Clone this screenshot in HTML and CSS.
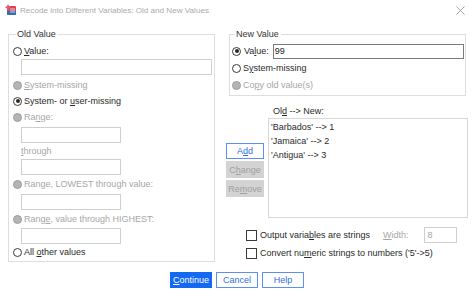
FILE: index.html
```html
<!DOCTYPE html>
<html>
<head>
<meta charset="utf-8">
<link rel="stylesheet" href="styles.css">
</head>
<body>
<div class="titlebar">
  <svg class="appicon" width="12" height="12" viewBox="0 0 12 12">
    <rect x="2" y="2" width="9" height="9" rx="1" fill="#d8425a"/>
    <rect x="2" y="7" width="9" height="4" rx="1" fill="#2f6fb8"/>
    <rect x="0.5" y="2.5" width="5" height="1.6" fill="#e85a6e"/>
    <rect x="2.2" y="0.8" width="1.6" height="5" fill="#e85a6e"/>
    <rect x="5" y="4" width="5" height="5" fill="#fff" opacity="0.35"/>
  </svg>
  <span class="title">Recode into Different Variables: Old and New Values</span>
  <svg class="close" width="9" height="9" viewBox="0 0 9 9">
    <path d="M0.5 0.5 L8.5 8.5 M8.5 0.5 L0.5 8.5" stroke="#8a8a8a" stroke-width="0.8"/>
  </svg>
</div>

<div class="main">
  <fieldset class="group old">
    <legend>Old Value</legend>
    <div class="row r14"><span class="radio"></span><span><u>V</u>alue:</span></div>
    <div class="input wide m1"></div>
    <div class="row dis m2"><span class="radio off"></span><span><u>S</u>ystem-missing</span></div>
    <div class="row"><span class="radio on"></span><span>System- or <u>u</u>ser-missing</span></div>
    <div class="row dis"><span class="radio off"></span><span>Ra<u>n</u>ge:</span></div>
    <div class="input small m2"></div>
    <div class="row dis ind"><span><u>t</u>hrough</span></div>
    <div class="input small"></div>
    <div class="row dis m1"><span class="radio off"></span><span>Range, LOWEST through value:</span></div>
    <div class="input small m2"></div>
    <div class="row dis m1"><span class="radio off"></span><span>Rang<u>e</u>, value through HIGHEST:</span></div>
    <div class="input small m1"></div>
    <div class="row"><span class="radio"></span><span>All <u>o</u>ther values</span></div>
  </fieldset>

  <div class="right">
    <fieldset class="group newv">
      <legend>New Value</legend>
      <div class="row vrow"><span class="radio on"></span><span class="vlabel">Va<u>l</u>ue:</span><div class="input val">99</div></div>
      <div class="row"><span class="radio"></span><span>S<u>y</u>stem-missing</span></div>
      <div class="row dis m1"><span class="radio off"></span><span>Co<u>p</u>y old value(s)</span></div>
    </fieldset>

    <div class="mid">
      <div class="btncol">
        <div class="btn add">A<u>d</u>d</div>
        <div class="btn gray">C<u>h</u>ange</div>
        <div class="btn gray">Re<u>m</u>ove</div>
      </div>
      <div class="listcol">
        <div class="listlabel">Ol<u>d</u> --&gt; New:</div>
        <div class="list">
          <div>'Barbados' --&gt; 1</div>
          <div>'Jamaica' --&gt; 2</div>
          <div>'Antigua' --&gt; 3</div>
        </div>
      </div>
    </div>

    <div class="checks">
      <div class="crow"><span class="check"></span><span class="ctext">Output varia<u>b</u>les are strings</span><span class="wlabel"><u>W</u>idth:</span><div class="input winput">8</div></div>
      <div class="crow"><span class="check"></span><span class="ctext">Convert nu<u>m</u>eric strings to numbers ('5'-&gt;5)</span></div>
    </div>
  </div>
</div>

<div class="footer">
  <div class="btn primary"><u>C</u>ontinue</div>
  <div class="btn outline">Cancel</div>
  <div class="btn outline">Help</div>
</div>
</body>
</html>
```

FILE: styles.css
```css
html, body {
  margin: 0;
  padding: 0;
  background: #fff;
}
body {
  width: 474px;
  height: 296px;
  overflow: hidden;
  font-family: "Liberation Sans", Arial, sans-serif;
  font-size: 9px;
  color: #2a2a2a;
}
u { text-decoration: underline; text-underline-offset: 1px; }

.titlebar {
  height: 20px;
  display: flex;
  align-items: center;
  padding-left: 5px;
  padding-right: 9px;
}
.appicon { flex: none; }
.title {
  margin-left: 3px;
  font-size: 8.1px;
  color: #ababab;
  flex: 1;
}
.close { flex: none; margin-top: 1px; }

.main {
  display: flex;
  align-items: flex-start;
  padding-left: 8px;
  margin-top: 9px;
}

.group {
  margin: 0;
  border: 1px solid #dedede;
  min-width: 0;
}
.group legend {
  padding: 0 2px 0 1px;
  margin-left: 3px;
  font-size: 9px;
  line-height: 11px;
  color: #333;
}

.old {
  width: 207px;
  box-sizing: border-box;
  padding: 0 0 2px 4px;
  height: 233px;
}

.row {
  display: flex;
  align-items: center;
  height: 16px;
  white-space: nowrap;
}
.r14 { height: 14px; margin-top: 4px; }
.m1 { margin-top: 1px; }
.m2 { margin-top: 2px; }
.ind { padding-left: 8px; }
.dis { color: #a6a6a6; }

.radio {
  flex: none;
  width: 7px;
  height: 7px;
  border: 1px solid #3a3a3a;
  border-radius: 50%;
  background: #fff;
  margin-right: 2px;
  position: relative;
}
.radio.on::after {
  content: "";
  position: absolute;
  left: 1.5px;
  top: 1.5px;
  width: 4px;
  height: 4px;
  border-radius: 50%;
  background: #2a2a2a;
}
.radio.off {
  background: #b4b4b4;
  border-color: #9c9c9c;
}

.input {
  box-sizing: border-box;
  height: 16px;
  border: 1px solid #cfcfcf;
  background: #fff;
  margin-left: 8px;
}
.input.wide { width: 191px; }
.input.small { width: 100px; }

.right {
  width: 242px;
  margin-left: 11px;
}

.newv {
  margin-left: 3px;
  margin-right: 2px;
  padding: 0 0 2px 2px;
}
.vrow { height: 18px; margin-top: 2px; }
.vlabel { margin-left: 1px; }
.input.val {
  flex: 1;
  height: 15px;
  margin-left: 4px;
  margin-right: 1px;
  border: 1px solid #7a7a7a;
  line-height: 13px;
  padding-left: 1px;
  color: #222;
}

.mid {
  display: flex;
  margin-top: 8px;
}
.btncol {
  width: 38px;
  display: flex;
  flex-direction: column;
  gap: 2px;
  margin-top: 39px;
}
.btn {
  box-sizing: border-box;
  height: 16px;
  display: flex;
  align-items: center;
  justify-content: center;
  font-size: 9px;
}
.btn.add {
  border: 1px solid #5d8ff0;
  color: #2e6fe0;
  background: #fff;
}
.btn.gray {
  background: #d3d3d3;
  color: #a0a0a0;
  border: 1px solid #d3d3d3;
  height: 17px;
}
.listcol {
  margin-left: 4px;
  flex: 1;
}
.listlabel {
  margin-left: 5px;
  height: 14px;
  line-height: 14px;
}
.list {
  box-sizing: border-box;
  height: 100px;
  border: 1px solid #d8d8d8;
  padding: 1px 0 0 2px;
  line-height: 14px;
}

.checks {
  padding-left: 20px;
  margin-top: 8px;
}
.crow {
  display: flex;
  align-items: center;
  height: 18px;
  white-space: nowrap;
}
.check {
  flex: none;
  width: 11px;
  height: 11px;
  box-sizing: border-box;
  border: 1px solid #3a3a3a;
  background: #fff;
  margin-right: 3px;
}
.wlabel {
  margin-left: 13px;
  color: #a6a6a6;
}
.input.winput {
  width: 33px;
  height: 16px;
  margin-left: 15px;
  color: #a6a6a6;
  line-height: 14px;
  padding-left: 3px;
}

.footer {
  display: flex;
  justify-content: center;
  gap: 4px;
  margin-top: 10px;
}
.footer .btn { width: 42px; }
.btn.primary {
  background: #1469f2;
  color: #fff;
  border: 1px solid #1469f2;
}
.btn.outline {
  background: #fff;
  color: #2e6fe0;
  border: 1px solid #5d8ff0;
}
```
